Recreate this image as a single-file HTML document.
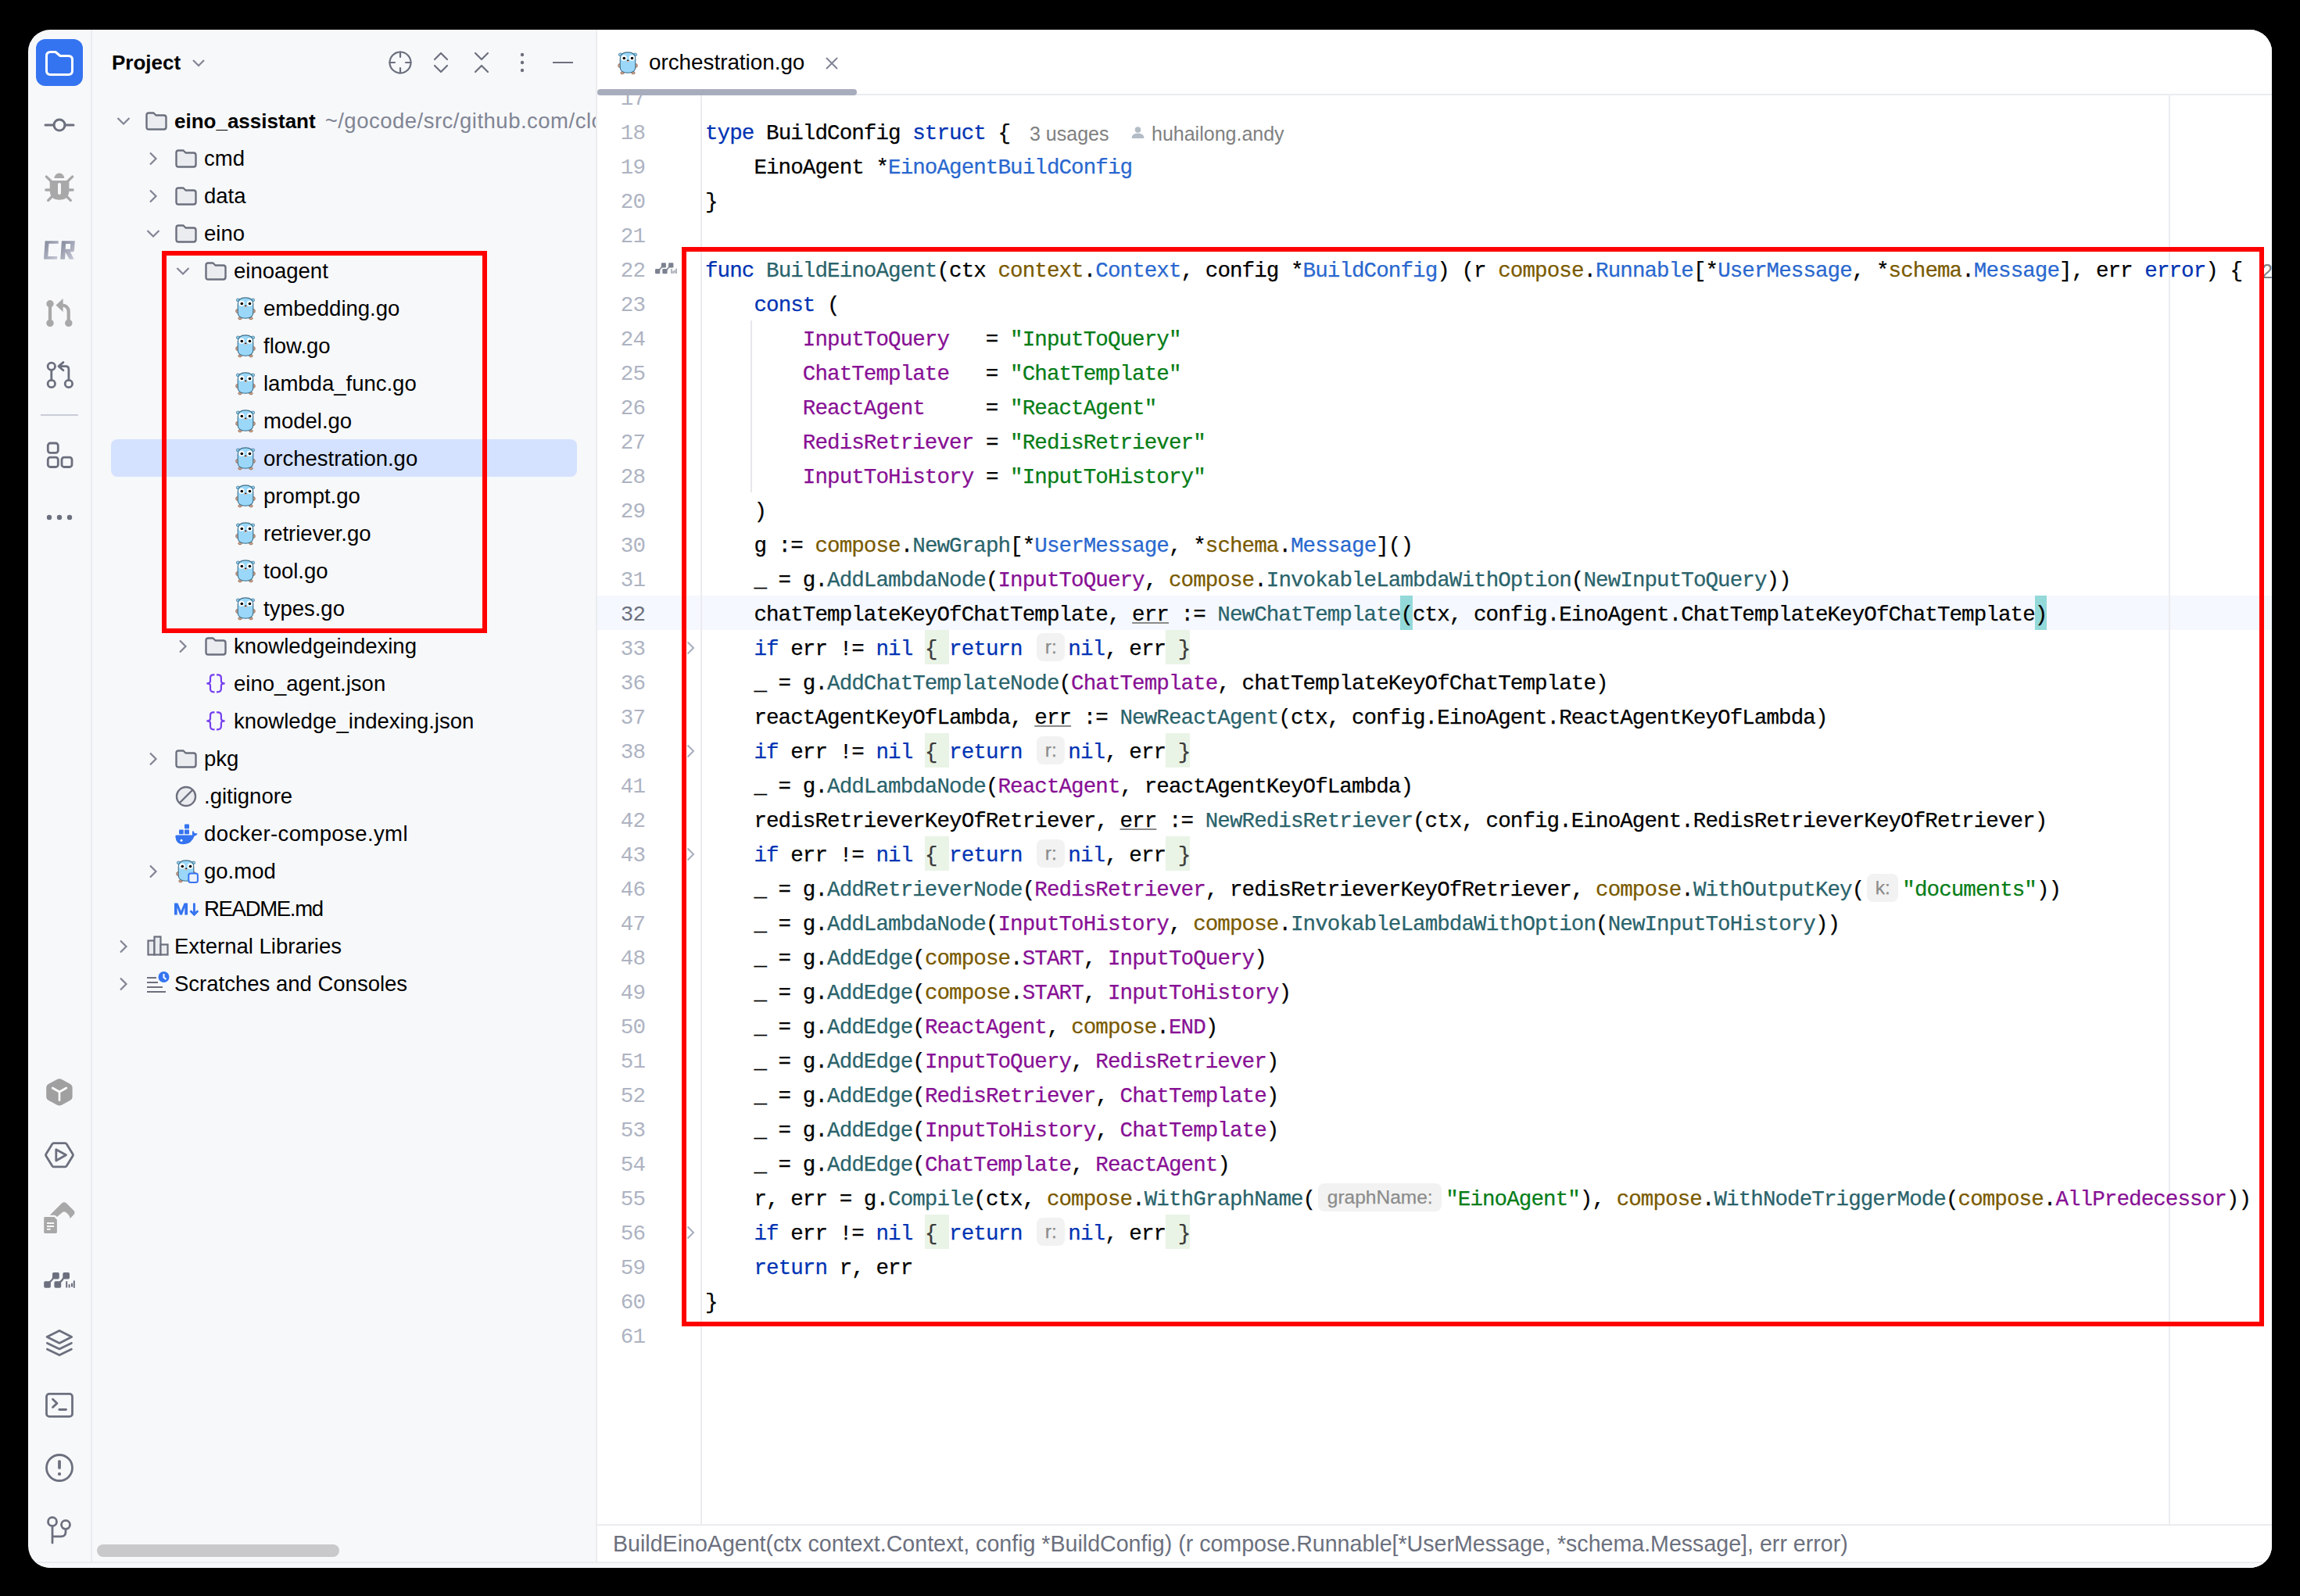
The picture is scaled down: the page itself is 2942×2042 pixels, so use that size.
<!DOCTYPE html>
<html><head><meta charset="utf-8"><style>
html,body{margin:0;padding:0;background:#000;width:2942px;height:2042px;overflow:hidden}
#win{position:absolute;left:36px;top:38px;width:2870px;height:1968px;border-radius:28px;overflow:hidden;background:#f7f8fa}
.abs{position:absolute}
#root{position:absolute;left:-36px;top:-38px;width:2942px;height:2042px}
.ic{position:absolute;line-height:0}
.ic svg{display:block;overflow:visible}
.tr{position:absolute;font-family:"Liberation Sans",sans-serif;font-size:27.5px;line-height:48px;height:48px;color:#000;white-space:pre}
.tr.b{font-weight:bold;font-size:26px}
.path{font-weight:normal;font-size:27.5px;color:#818594;margin-left:12px;letter-spacing:0.5px}
.hdr{position:absolute;font-family:"Liberation Sans",sans-serif;font-weight:bold;font-size:26px;line-height:44px;color:#000}
.ln{position:absolute;left:700px;width:125px;text-align:right;font-family:"Liberation Mono",monospace;font-size:27.5px;letter-spacing:-0.9px;line-height:44px;height:44px;color:#aeb3c2;white-space:pre}
.ln.cur{color:#6c707e}
.cl{position:absolute;left:902px;font-family:"Liberation Mono",monospace;font-size:27.5px;letter-spacing:-0.9px;line-height:44px;height:44px;color:#000;white-space:pre;-webkit-text-stroke:0.25px currentColor}
.k{color:#0033b3} .f{color:#2a636b} .t{color:#2a68cf} .p{color:#7a5a00} .c{color:#871094} .s{color:#067d17}
.u{text-decoration:underline;text-decoration-color:#8a8a8a;text-underline-offset:1.5px;text-decoration-thickness:2px}
.bm{background:#93d9d9;display:inline-block;height:44px;vertical-align:top;margin-top:-3.0px;line-height:50px}
.fold{background:#e9f4e6;color:#3a3a3a;display:inline-block;height:44px;vertical-align:top;margin-top:-3.0px;line-height:50px}
.hint{display:inline-block;height:44px;vertical-align:top;position:relative}
.hbox{position:absolute;top:1px;height:36px;border-radius:8px;background:#f2f2f2;color:#8c8c8c;font-family:"Liberation Sans",sans-serif;font-size:24.5px;line-height:36px;text-align:center;letter-spacing:normal}
.inl{position:absolute;font-family:"Liberation Sans",sans-serif;font-size:25px;color:#808080;white-space:pre;line-height:44px}
</style></head><body>
<div id="win"><div id="root">
<!-- left toolbar -->
<div class="abs" style="left:116px;top:0;width:2px;height:2042px;background:#ebecf0"></div>
<div style="position:absolute;left:46px;top:50px;width:60px;height:60px;border-radius:12px;background:#3574f0"></div><div class="ic" style="left:46px;top:50px"><svg width="60" height="60" viewBox="0 0 60 60"><path d="M13.5 21.5 Q13.5 16.5 18.5 16.5 H25 L31 21.5 H41.5 Q46.5 21.5 46.5 26.5 V40.5 Q46.5 45.5 41.5 45.5 H18.5 Q13.5 45.5 13.5 40.5 Z" fill="none" stroke="#fff" stroke-width="3" stroke-linejoin="round"/></svg></div><div class="ic" style="left:56.0px;top:140.0px"><svg width="40" height="40" viewBox="0 0 40 40"><circle cx="20" cy="20" r="7" stroke="#6c707e" stroke-width="3" fill="none" stroke-linecap="round" stroke-linejoin="round"/><path d="M2 20 H13 M27 20 H38" stroke="#6c707e" stroke-width="3" fill="none" stroke-linecap="round" stroke-linejoin="round"/></svg></div><div class="ic" style="left:56.0px;top:221.0px"><svg width="40" height="40" viewBox="0 0 40 40"><path d="M13.5 7 A6.35 6.5 0 0 1 26.2 7 Z" fill="#a8a8a8"/><path d="M7.7 10 H32.4 V22 Q32.4 34.7 20 34.7 Q7.7 34.7 7.7 22 Z" fill="#a8a8a8"/><rect x="18" y="13" width="4" height="15" rx="2" fill="#f7f8fa"/><path d="M3.4 5.1 L9 10.5 M36.6 5.1 L31 10.5 M2.8 22 H8 M32 22 H37.2 M5.7 35.4 L10.5 30.5 M34.3 35.4 L29.5 30.5" stroke="#a8a8a8" stroke-width="3.3" stroke-linecap="round"/></svg></div><div class="ic" style="left:52px;top:296px"><svg width="48" height="48" viewBox="0 0 48 48"><defs><linearGradient id="crg" x1="0" y1="0" x2="1" y2="1"><stop offset="0" stop-color="#858a9d"/><stop offset="1" stop-color="#c6c9d5"/></linearGradient></defs><g transform="translate(2.5,0) skewX(-4)" fill="url(#crg)" fill-rule="evenodd"><path d="M4 12.2 H21.2 V15.8 H9.1 V32 H21 V35.8 H4.8 L4 35 Z"/><path d="M25.3 35.8 V12.2 H42.2 V24.8 L40.8 26.3 H37.2 L42.7 35.8 H36.8 L31 26.5 V35.8 Z M30.8 16 V22.8 H36.9 V16 Z"/></g></svg></div><div class="ic" style="left:52px;top:376px"><svg width="48" height="48" viewBox="0 0 48 48"><circle cx="12" cy="12.8" r="4.7" fill="#a8a8a8"/><circle cx="12" cy="37.4" r="4.7" fill="#a8a8a8"/><circle cx="35.8" cy="37.4" r="4.7" fill="#a8a8a8"/><path d="M12 12.8 V37.4" stroke="#a8a8a8" stroke-width="4.2"/><path d="M35.7 37.4 V23 Q35.7 15 27 14.4" stroke="#a8a8a8" stroke-width="4.2" fill="none"/><path d="M19.5 14.4 L28.6 5.9 V22.9 Z" fill="#a8a8a8"/></svg></div><div class="ic" style="left:52px;top:456px"><svg width="48" height="48" viewBox="0 0 48 48"><circle cx="13.8" cy="12.8" r="4.7" stroke="#6c707e" stroke-width="2.8" fill="none" stroke-linecap="round" stroke-linejoin="round"/><circle cx="13.8" cy="35" r="4.7" stroke="#6c707e" stroke-width="2.8" fill="none" stroke-linecap="round" stroke-linejoin="round"/><circle cx="35.9" cy="35" r="4.7" stroke="#6c707e" stroke-width="2.8" fill="none" stroke-linecap="round" stroke-linejoin="round"/><path d="M13.8 17.5 V30.3 M35.9 30.3 V16.5 Q35.9 12.6 32 12.6 H23 M28.9 7.6 L23 12.6 L28.9 17.8" stroke="#6c707e" stroke-width="2.8" fill="none" stroke-linecap="round" stroke-linejoin="round"/></svg></div><div style="position:absolute;left:52px;top:530px;width:48px;height:2px;background:#c9ccd6"></div><div class="ic" style="left:52px;top:557px"><svg width="48" height="48" viewBox="0 0 48 48"><rect x="9.3" y="10" width="13" height="12.3" rx="3" stroke="#6c707e" stroke-width="2.8" fill="none" stroke-linecap="round" stroke-linejoin="round"/><rect x="9.3" y="28.2" width="13" height="12.3" rx="3" stroke="#6c707e" stroke-width="2.8" fill="none" stroke-linecap="round" stroke-linejoin="round"/><rect x="27" y="28.2" width="13" height="12.3" rx="3" stroke="#6c707e" stroke-width="2.8" fill="none" stroke-linecap="round" stroke-linejoin="round"/></svg></div><div class="ic" style="left:56.0px;top:656.0px"><svg width="40" height="12" viewBox="0 0 40 12"><circle cx="7" cy="6" r="3.2" fill="#6c707e"/><circle cx="20" cy="6" r="3.2" fill="#6c707e"/><circle cx="33" cy="6" r="3.2" fill="#6c707e"/></svg></div><div class="ic" style="left:52px;top:1374px"><svg width="48" height="48" viewBox="0 0 48 48"><path d="M20.5 7.2 Q24 5.2 27.5 7.2 L37.5 12.8 Q40.6 14.6 40.6 18 V29 Q40.6 32.3 37.5 34 L27.5 39.6 Q24 41.6 20.5 39.6 L10.3 34 Q7.2 32.3 7.2 29 V18 Q7.2 14.6 10.3 12.8 Z" fill="#a0a0a0"/><path d="M15.2 18 L24 23 L32.9 18 M24 23 V33.8" stroke="#fff" stroke-width="2.6" fill="none" stroke-linecap="round" stroke-linejoin="round"/></svg></div><div class="ic" style="left:52px;top:1454px"><svg width="48" height="48" viewBox="0 0 48 48"><path d="M16.5 8.7 H31.5 Q32.5 8.7 33.2 9.7 L41.2 22.8 Q41.8 23.8 41.2 24.8 L33.2 37.8 Q32.5 38.8 31.5 38.8 H16.5 Q15.5 38.8 14.8 37.8 L6.8 24.8 Q6.2 23.8 6.8 22.8 L14.8 9.7 Q15.5 8.7 16.5 8.7 Z" stroke="#6c707e" stroke-width="2.8" fill="none" stroke-linecap="round" stroke-linejoin="round"/><path d="M19.8 16.8 V31 L32.5 23.8 Z" stroke="#6c707e" stroke-width="2.8" fill="none" stroke-linecap="round" stroke-linejoin="round"/></svg></div><div class="ic" style="left:52px;top:1532px"><svg width="48" height="48" viewBox="0 0 48 48"><path d="M11.7 22.7 L27 7.5 Q30 4.8 33 7.5 L42.5 17 Q44.5 19.5 42.5 22 L37.6 27 Q37 23 34.5 21 L32 19 Q30 17.5 28 19 L20.8 25 Q19.5 22.8 17 22.7 Z" fill="#a8a8a8"/><path d="M4.2 26.5 Q4.2 25.1 5.6 25.1 H17.4 L20.9 28.6 V44.5 Q20.9 45.9 19.5 45.9 H5.6 Q4.2 45.9 4.2 44.5 Z" fill="#a8a8a8"/><path d="M8 33.1 H17.1 M8 37 H17.1 M8 40.8 H12.6" stroke="#f7f8fa" stroke-width="2"/></svg></div><div class="ic" style="left:52px;top:1614px"><svg width="48" height="48" viewBox="0 0 48 48"><g fill="#6c707e"><rect x="4.2" y="25.3" width="8.7" height="8.4" rx="1.8"/><rect x="15" y="14.1" width="8.8" height="8.5" rx="1.8"/><rect x="17.4" y="25.3" width="8.8" height="8.4" rx="1.8"/><rect x="28.3" y="14.1" width="8.7" height="8.5" rx="1.8"/></g><path d="M11.5 26.5 Q15 24 16 21 M24.7 26.5 Q28 24 29.3 21" stroke="#6c707e" stroke-width="2.2" fill="none"/><path d="M33.2 25.3 V33.4 M36.6 29.2 V33.4 M40 27.7 V32.5 M42.8 24.4 V33.7" stroke="#6c707e" stroke-width="2"/></svg></div><div class="ic" style="left:52px;top:1694px"><svg width="48" height="48" viewBox="0 0 48 48"><path d="M8.1 16.4 L24 8.4 L39.7 16.4 L24 24.4 Z" stroke="#6c707e" stroke-width="2.8" fill="none" stroke-linecap="round" stroke-linejoin="round"/><path d="M8.4 24.4 L24 31.9 L39.4 24.4 M8.4 32.3 L24 39.8 L39.4 32.3" stroke="#6c707e" stroke-width="2.8" fill="none" stroke-linecap="round" stroke-linejoin="round"/></svg></div><div class="ic" style="left:52px;top:1774px"><svg width="48" height="48" viewBox="0 0 48 48"><rect x="7.5" y="9.4" width="33" height="29" rx="3.5" stroke="#6c707e" stroke-width="2.8" fill="none" stroke-linecap="round" stroke-linejoin="round"/><path d="M15.5 16.2 L21 21.4 L15.5 26.5 M23.8 29.5 H32.5" stroke="#6c707e" stroke-width="2.8" fill="none" stroke-linecap="round" stroke-linejoin="round"/></svg></div><div class="ic" style="left:52px;top:1854px"><svg width="48" height="48" viewBox="0 0 48 48"><circle cx="24" cy="24" r="16.5" stroke="#6c707e" stroke-width="2.8" fill="none" stroke-linecap="round" stroke-linejoin="round"/><path d="M24 15.8 V23.9" stroke="#6c707e" stroke-width="3.8" stroke-linecap="round"/><circle cx="24" cy="31.9" r="2.1" fill="#6c707e"/></svg></div><div class="ic" style="left:52px;top:1934px"><svg width="48" height="48" viewBox="0 0 48 48"><circle cx="15" cy="12.9" r="5.5" stroke="#6c707e" stroke-width="2.8" fill="none" stroke-linecap="round" stroke-linejoin="round"/><circle cx="32" cy="16.8" r="5.5" stroke="#6c707e" stroke-width="2.8" fill="none" stroke-linecap="round" stroke-linejoin="round"/><path d="M15 18.4 V40 M15 31.9 H26 Q32 31.9 32 26 V22.3" stroke="#6c707e" stroke-width="2.8" fill="none" stroke-linecap="round" stroke-linejoin="round"/></svg></div>
<!-- project panel -->
<div class="hdr" style="left:143px;top:58px">Project</div><div class="ic" style="left:244px;top:74px"><svg width="20" height="14" viewBox="0 0 20 14"><path d="M3 3 L10 10 L17 3" fill="none" stroke="#818594" stroke-width="2.2"/></svg></div><div class="ic" style="left:496px;top:64px"><svg width="32" height="32" viewBox="0 0 32 32"><circle cx="16" cy="16" r="13.5" stroke="#6c707e" stroke-width="2.2" fill="none" stroke-linecap="round" stroke-linejoin="round"/><path d="M16 2.5 V9 M16 23 V29.5 M2.5 16 H9 M23 16 H29.5" stroke="#6c707e" stroke-width="2.2" fill="none" stroke-linecap="round" stroke-linejoin="round"/></svg></div><div class="ic" style="left:548px;top:64px"><svg width="32" height="32" viewBox="0 0 32 32"><path d="M8 12 L16 4 L24 12 M8 20 L16 28 L24 20" stroke="#6c707e" stroke-width="2.2" fill="none" stroke-linecap="round" stroke-linejoin="round"/></svg></div><div class="ic" style="left:600px;top:64px"><svg width="32" height="32" viewBox="0 0 32 32"><path d="M8 4 L16 12 L24 4 M8 28 L16 20 L24 28" stroke="#6c707e" stroke-width="2.2" fill="none" stroke-linecap="round" stroke-linejoin="round"/></svg></div><div class="ic" style="left:652px;top:64px"><svg width="32" height="32" viewBox="0 0 32 32"><circle cx="16" cy="6" r="2.2" fill="#6c707e"/><circle cx="16" cy="16" r="2.2" fill="#6c707e"/><circle cx="16" cy="26" r="2.2" fill="#6c707e"/></svg></div><div style="position:absolute;left:707px;top:79px;width:26px;height:2.4px;background:#6c707e"></div>
<div class="abs" style="left:142px;top:562px;width:596px;height:48px;border-radius:8px;background:#d4e2ff"></div>
<div class="ic" style="left:149px;top:148.5px"><svg width="18" height="12" viewBox="0 0 18 12"><path d="M1.5 2 L9 9.5 L16.5 2" fill="none" stroke="#818594" stroke-width="2.2"/></svg></div><div class="ic" style="left:186px;top:142.5px"><svg width="28" height="24" viewBox="0 0 28 24"><path d="M1.5 4.5 Q1.5 1.5 4.5 1.5 H10.5 L13.5 4.5 H23.5 Q26.5 4.5 26.5 7.5 V19.5 Q26.5 22.5 23.5 22.5 H4.5 Q1.5 22.5 1.5 19.5 Z" fill="#ebecf0" stroke="#6c707e" stroke-width="2.4" stroke-linejoin="round"/></svg></div><div class="tr b" style="left:223px;top:130.5px">eino_assistant<span class="path">~/gocode/src/github.com/cloudwego/eino-examples/eino_assistant</span></div><div class="ic" style="left:190px;top:193.5px"><svg width="12" height="18" viewBox="0 0 12 18"><path d="M2 1.5 L9.5 9 L2 16.5" fill="none" stroke="#818594" stroke-width="2.2"/></svg></div><div class="ic" style="left:224px;top:190.5px"><svg width="28" height="24" viewBox="0 0 28 24"><path d="M1.5 4.5 Q1.5 1.5 4.5 1.5 H10.5 L13.5 4.5 H23.5 Q26.5 4.5 26.5 7.5 V19.5 Q26.5 22.5 23.5 22.5 H4.5 Q1.5 22.5 1.5 19.5 Z" fill="#ebecf0" stroke="#6c707e" stroke-width="2.4" stroke-linejoin="round"/></svg></div><div class="tr" style="left:261px;top:178.5px;">cmd</div><div class="ic" style="left:190px;top:241.5px"><svg width="12" height="18" viewBox="0 0 12 18"><path d="M2 1.5 L9.5 9 L2 16.5" fill="none" stroke="#818594" stroke-width="2.2"/></svg></div><div class="ic" style="left:224px;top:238.5px"><svg width="28" height="24" viewBox="0 0 28 24"><path d="M1.5 4.5 Q1.5 1.5 4.5 1.5 H10.5 L13.5 4.5 H23.5 Q26.5 4.5 26.5 7.5 V19.5 Q26.5 22.5 23.5 22.5 H4.5 Q1.5 22.5 1.5 19.5 Z" fill="#ebecf0" stroke="#6c707e" stroke-width="2.4" stroke-linejoin="round"/></svg></div><div class="tr" style="left:261px;top:226.5px;">data</div><div class="ic" style="left:187px;top:292.5px"><svg width="18" height="12" viewBox="0 0 18 12"><path d="M1.5 2 L9 9.5 L16.5 2" fill="none" stroke="#818594" stroke-width="2.2"/></svg></div><div class="ic" style="left:224px;top:286.5px"><svg width="28" height="24" viewBox="0 0 28 24"><path d="M1.5 4.5 Q1.5 1.5 4.5 1.5 H10.5 L13.5 4.5 H23.5 Q26.5 4.5 26.5 7.5 V19.5 Q26.5 22.5 23.5 22.5 H4.5 Q1.5 22.5 1.5 19.5 Z" fill="#ebecf0" stroke="#6c707e" stroke-width="2.4" stroke-linejoin="round"/></svg></div><div class="tr" style="left:261px;top:274.5px;">eino</div><div class="ic" style="left:225px;top:340.5px"><svg width="18" height="12" viewBox="0 0 18 12"><path d="M1.5 2 L9 9.5 L16.5 2" fill="none" stroke="#818594" stroke-width="2.2"/></svg></div><div class="ic" style="left:262px;top:334.5px"><svg width="28" height="24" viewBox="0 0 28 24"><path d="M1.5 4.5 Q1.5 1.5 4.5 1.5 H10.5 L13.5 4.5 H23.5 Q26.5 4.5 26.5 7.5 V19.5 Q26.5 22.5 23.5 22.5 H4.5 Q1.5 22.5 1.5 19.5 Z" fill="#ebecf0" stroke="#6c707e" stroke-width="2.4" stroke-linejoin="round"/></svg></div><div class="tr" style="left:299px;top:322.5px;">einoagent</div><div class="ic" style="left:300px;top:379.5px"><svg width="28" height="30" viewBox="0 0 28 30"><ellipse cx="4.6" cy="3.9" rx="2.3" ry="1.9" fill="#8fd0f0" stroke="#4a7a96" stroke-width="0.8"/><ellipse cx="23.4" cy="3.9" rx="2.3" ry="1.9" fill="#8fd0f0" stroke="#4a7a96" stroke-width="0.8"/><ellipse cx="3.6" cy="18" rx="2" ry="2.4" fill="#d9a68a" stroke="#6b4a3a" stroke-width="0.6"/><ellipse cx="24.4" cy="18" rx="2" ry="2.4" fill="#d9a68a" stroke="#6b4a3a" stroke-width="0.6"/><ellipse cx="7" cy="27.3" rx="2.2" ry="1.6" fill="#d9a68a" stroke="#6b4a3a" stroke-width="0.6"/><ellipse cx="21" cy="27.3" rx="2.2" ry="1.6" fill="#d9a68a" stroke="#6b4a3a" stroke-width="0.6"/><path d="M4.2 9 Q4.2 0.9 14 0.9 Q23.8 0.9 23.8 9 V20 Q23.8 27.2 14 27.2 Q4.2 27.2 4.2 20 Z" fill="#9ad7f8" stroke="#3e6e88" stroke-width="1.1"/><circle cx="9" cy="8.2" r="3.6" fill="#fff"/><circle cx="19.3" cy="8.2" r="3.6" fill="#fff"/><circle cx="9.3" cy="8.5" r="1.8" fill="#000"/><circle cx="19.5" cy="8.5" r="1.8" fill="#000"/><ellipse cx="14.2" cy="12" rx="1.7" ry="1.3" fill="#e8b49a"/><ellipse cx="14.2" cy="11.3" rx="1.1" ry="0.8" fill="#000"/></svg></div><div class="tr" style="left:337px;top:370.5px;">embedding.go</div><div class="ic" style="left:300px;top:427.5px"><svg width="28" height="30" viewBox="0 0 28 30"><ellipse cx="4.6" cy="3.9" rx="2.3" ry="1.9" fill="#8fd0f0" stroke="#4a7a96" stroke-width="0.8"/><ellipse cx="23.4" cy="3.9" rx="2.3" ry="1.9" fill="#8fd0f0" stroke="#4a7a96" stroke-width="0.8"/><ellipse cx="3.6" cy="18" rx="2" ry="2.4" fill="#d9a68a" stroke="#6b4a3a" stroke-width="0.6"/><ellipse cx="24.4" cy="18" rx="2" ry="2.4" fill="#d9a68a" stroke="#6b4a3a" stroke-width="0.6"/><ellipse cx="7" cy="27.3" rx="2.2" ry="1.6" fill="#d9a68a" stroke="#6b4a3a" stroke-width="0.6"/><ellipse cx="21" cy="27.3" rx="2.2" ry="1.6" fill="#d9a68a" stroke="#6b4a3a" stroke-width="0.6"/><path d="M4.2 9 Q4.2 0.9 14 0.9 Q23.8 0.9 23.8 9 V20 Q23.8 27.2 14 27.2 Q4.2 27.2 4.2 20 Z" fill="#9ad7f8" stroke="#3e6e88" stroke-width="1.1"/><circle cx="9" cy="8.2" r="3.6" fill="#fff"/><circle cx="19.3" cy="8.2" r="3.6" fill="#fff"/><circle cx="9.3" cy="8.5" r="1.8" fill="#000"/><circle cx="19.5" cy="8.5" r="1.8" fill="#000"/><ellipse cx="14.2" cy="12" rx="1.7" ry="1.3" fill="#e8b49a"/><ellipse cx="14.2" cy="11.3" rx="1.1" ry="0.8" fill="#000"/></svg></div><div class="tr" style="left:337px;top:418.5px;">flow.go</div><div class="ic" style="left:300px;top:475.5px"><svg width="28" height="30" viewBox="0 0 28 30"><ellipse cx="4.6" cy="3.9" rx="2.3" ry="1.9" fill="#8fd0f0" stroke="#4a7a96" stroke-width="0.8"/><ellipse cx="23.4" cy="3.9" rx="2.3" ry="1.9" fill="#8fd0f0" stroke="#4a7a96" stroke-width="0.8"/><ellipse cx="3.6" cy="18" rx="2" ry="2.4" fill="#d9a68a" stroke="#6b4a3a" stroke-width="0.6"/><ellipse cx="24.4" cy="18" rx="2" ry="2.4" fill="#d9a68a" stroke="#6b4a3a" stroke-width="0.6"/><ellipse cx="7" cy="27.3" rx="2.2" ry="1.6" fill="#d9a68a" stroke="#6b4a3a" stroke-width="0.6"/><ellipse cx="21" cy="27.3" rx="2.2" ry="1.6" fill="#d9a68a" stroke="#6b4a3a" stroke-width="0.6"/><path d="M4.2 9 Q4.2 0.9 14 0.9 Q23.8 0.9 23.8 9 V20 Q23.8 27.2 14 27.2 Q4.2 27.2 4.2 20 Z" fill="#9ad7f8" stroke="#3e6e88" stroke-width="1.1"/><circle cx="9" cy="8.2" r="3.6" fill="#fff"/><circle cx="19.3" cy="8.2" r="3.6" fill="#fff"/><circle cx="9.3" cy="8.5" r="1.8" fill="#000"/><circle cx="19.5" cy="8.5" r="1.8" fill="#000"/><ellipse cx="14.2" cy="12" rx="1.7" ry="1.3" fill="#e8b49a"/><ellipse cx="14.2" cy="11.3" rx="1.1" ry="0.8" fill="#000"/></svg></div><div class="tr" style="left:337px;top:466.5px;">lambda_func.go</div><div class="ic" style="left:300px;top:523.5px"><svg width="28" height="30" viewBox="0 0 28 30"><ellipse cx="4.6" cy="3.9" rx="2.3" ry="1.9" fill="#8fd0f0" stroke="#4a7a96" stroke-width="0.8"/><ellipse cx="23.4" cy="3.9" rx="2.3" ry="1.9" fill="#8fd0f0" stroke="#4a7a96" stroke-width="0.8"/><ellipse cx="3.6" cy="18" rx="2" ry="2.4" fill="#d9a68a" stroke="#6b4a3a" stroke-width="0.6"/><ellipse cx="24.4" cy="18" rx="2" ry="2.4" fill="#d9a68a" stroke="#6b4a3a" stroke-width="0.6"/><ellipse cx="7" cy="27.3" rx="2.2" ry="1.6" fill="#d9a68a" stroke="#6b4a3a" stroke-width="0.6"/><ellipse cx="21" cy="27.3" rx="2.2" ry="1.6" fill="#d9a68a" stroke="#6b4a3a" stroke-width="0.6"/><path d="M4.2 9 Q4.2 0.9 14 0.9 Q23.8 0.9 23.8 9 V20 Q23.8 27.2 14 27.2 Q4.2 27.2 4.2 20 Z" fill="#9ad7f8" stroke="#3e6e88" stroke-width="1.1"/><circle cx="9" cy="8.2" r="3.6" fill="#fff"/><circle cx="19.3" cy="8.2" r="3.6" fill="#fff"/><circle cx="9.3" cy="8.5" r="1.8" fill="#000"/><circle cx="19.5" cy="8.5" r="1.8" fill="#000"/><ellipse cx="14.2" cy="12" rx="1.7" ry="1.3" fill="#e8b49a"/><ellipse cx="14.2" cy="11.3" rx="1.1" ry="0.8" fill="#000"/></svg></div><div class="tr" style="left:337px;top:514.5px;">model.go</div><div class="ic" style="left:300px;top:571.5px"><svg width="28" height="30" viewBox="0 0 28 30"><ellipse cx="4.6" cy="3.9" rx="2.3" ry="1.9" fill="#8fd0f0" stroke="#4a7a96" stroke-width="0.8"/><ellipse cx="23.4" cy="3.9" rx="2.3" ry="1.9" fill="#8fd0f0" stroke="#4a7a96" stroke-width="0.8"/><ellipse cx="3.6" cy="18" rx="2" ry="2.4" fill="#d9a68a" stroke="#6b4a3a" stroke-width="0.6"/><ellipse cx="24.4" cy="18" rx="2" ry="2.4" fill="#d9a68a" stroke="#6b4a3a" stroke-width="0.6"/><ellipse cx="7" cy="27.3" rx="2.2" ry="1.6" fill="#d9a68a" stroke="#6b4a3a" stroke-width="0.6"/><ellipse cx="21" cy="27.3" rx="2.2" ry="1.6" fill="#d9a68a" stroke="#6b4a3a" stroke-width="0.6"/><path d="M4.2 9 Q4.2 0.9 14 0.9 Q23.8 0.9 23.8 9 V20 Q23.8 27.2 14 27.2 Q4.2 27.2 4.2 20 Z" fill="#9ad7f8" stroke="#3e6e88" stroke-width="1.1"/><circle cx="9" cy="8.2" r="3.6" fill="#fff"/><circle cx="19.3" cy="8.2" r="3.6" fill="#fff"/><circle cx="9.3" cy="8.5" r="1.8" fill="#000"/><circle cx="19.5" cy="8.5" r="1.8" fill="#000"/><ellipse cx="14.2" cy="12" rx="1.7" ry="1.3" fill="#e8b49a"/><ellipse cx="14.2" cy="11.3" rx="1.1" ry="0.8" fill="#000"/></svg></div><div class="tr" style="left:337px;top:562.5px;">orchestration.go</div><div class="ic" style="left:300px;top:619.5px"><svg width="28" height="30" viewBox="0 0 28 30"><ellipse cx="4.6" cy="3.9" rx="2.3" ry="1.9" fill="#8fd0f0" stroke="#4a7a96" stroke-width="0.8"/><ellipse cx="23.4" cy="3.9" rx="2.3" ry="1.9" fill="#8fd0f0" stroke="#4a7a96" stroke-width="0.8"/><ellipse cx="3.6" cy="18" rx="2" ry="2.4" fill="#d9a68a" stroke="#6b4a3a" stroke-width="0.6"/><ellipse cx="24.4" cy="18" rx="2" ry="2.4" fill="#d9a68a" stroke="#6b4a3a" stroke-width="0.6"/><ellipse cx="7" cy="27.3" rx="2.2" ry="1.6" fill="#d9a68a" stroke="#6b4a3a" stroke-width="0.6"/><ellipse cx="21" cy="27.3" rx="2.2" ry="1.6" fill="#d9a68a" stroke="#6b4a3a" stroke-width="0.6"/><path d="M4.2 9 Q4.2 0.9 14 0.9 Q23.8 0.9 23.8 9 V20 Q23.8 27.2 14 27.2 Q4.2 27.2 4.2 20 Z" fill="#9ad7f8" stroke="#3e6e88" stroke-width="1.1"/><circle cx="9" cy="8.2" r="3.6" fill="#fff"/><circle cx="19.3" cy="8.2" r="3.6" fill="#fff"/><circle cx="9.3" cy="8.5" r="1.8" fill="#000"/><circle cx="19.5" cy="8.5" r="1.8" fill="#000"/><ellipse cx="14.2" cy="12" rx="1.7" ry="1.3" fill="#e8b49a"/><ellipse cx="14.2" cy="11.3" rx="1.1" ry="0.8" fill="#000"/></svg></div><div class="tr" style="left:337px;top:610.5px;">prompt.go</div><div class="ic" style="left:300px;top:667.5px"><svg width="28" height="30" viewBox="0 0 28 30"><ellipse cx="4.6" cy="3.9" rx="2.3" ry="1.9" fill="#8fd0f0" stroke="#4a7a96" stroke-width="0.8"/><ellipse cx="23.4" cy="3.9" rx="2.3" ry="1.9" fill="#8fd0f0" stroke="#4a7a96" stroke-width="0.8"/><ellipse cx="3.6" cy="18" rx="2" ry="2.4" fill="#d9a68a" stroke="#6b4a3a" stroke-width="0.6"/><ellipse cx="24.4" cy="18" rx="2" ry="2.4" fill="#d9a68a" stroke="#6b4a3a" stroke-width="0.6"/><ellipse cx="7" cy="27.3" rx="2.2" ry="1.6" fill="#d9a68a" stroke="#6b4a3a" stroke-width="0.6"/><ellipse cx="21" cy="27.3" rx="2.2" ry="1.6" fill="#d9a68a" stroke="#6b4a3a" stroke-width="0.6"/><path d="M4.2 9 Q4.2 0.9 14 0.9 Q23.8 0.9 23.8 9 V20 Q23.8 27.2 14 27.2 Q4.2 27.2 4.2 20 Z" fill="#9ad7f8" stroke="#3e6e88" stroke-width="1.1"/><circle cx="9" cy="8.2" r="3.6" fill="#fff"/><circle cx="19.3" cy="8.2" r="3.6" fill="#fff"/><circle cx="9.3" cy="8.5" r="1.8" fill="#000"/><circle cx="19.5" cy="8.5" r="1.8" fill="#000"/><ellipse cx="14.2" cy="12" rx="1.7" ry="1.3" fill="#e8b49a"/><ellipse cx="14.2" cy="11.3" rx="1.1" ry="0.8" fill="#000"/></svg></div><div class="tr" style="left:337px;top:658.5px;">retriever.go</div><div class="ic" style="left:300px;top:715.5px"><svg width="28" height="30" viewBox="0 0 28 30"><ellipse cx="4.6" cy="3.9" rx="2.3" ry="1.9" fill="#8fd0f0" stroke="#4a7a96" stroke-width="0.8"/><ellipse cx="23.4" cy="3.9" rx="2.3" ry="1.9" fill="#8fd0f0" stroke="#4a7a96" stroke-width="0.8"/><ellipse cx="3.6" cy="18" rx="2" ry="2.4" fill="#d9a68a" stroke="#6b4a3a" stroke-width="0.6"/><ellipse cx="24.4" cy="18" rx="2" ry="2.4" fill="#d9a68a" stroke="#6b4a3a" stroke-width="0.6"/><ellipse cx="7" cy="27.3" rx="2.2" ry="1.6" fill="#d9a68a" stroke="#6b4a3a" stroke-width="0.6"/><ellipse cx="21" cy="27.3" rx="2.2" ry="1.6" fill="#d9a68a" stroke="#6b4a3a" stroke-width="0.6"/><path d="M4.2 9 Q4.2 0.9 14 0.9 Q23.8 0.9 23.8 9 V20 Q23.8 27.2 14 27.2 Q4.2 27.2 4.2 20 Z" fill="#9ad7f8" stroke="#3e6e88" stroke-width="1.1"/><circle cx="9" cy="8.2" r="3.6" fill="#fff"/><circle cx="19.3" cy="8.2" r="3.6" fill="#fff"/><circle cx="9.3" cy="8.5" r="1.8" fill="#000"/><circle cx="19.5" cy="8.5" r="1.8" fill="#000"/><ellipse cx="14.2" cy="12" rx="1.7" ry="1.3" fill="#e8b49a"/><ellipse cx="14.2" cy="11.3" rx="1.1" ry="0.8" fill="#000"/></svg></div><div class="tr" style="left:337px;top:706.5px;">tool.go</div><div class="ic" style="left:300px;top:763.5px"><svg width="28" height="30" viewBox="0 0 28 30"><ellipse cx="4.6" cy="3.9" rx="2.3" ry="1.9" fill="#8fd0f0" stroke="#4a7a96" stroke-width="0.8"/><ellipse cx="23.4" cy="3.9" rx="2.3" ry="1.9" fill="#8fd0f0" stroke="#4a7a96" stroke-width="0.8"/><ellipse cx="3.6" cy="18" rx="2" ry="2.4" fill="#d9a68a" stroke="#6b4a3a" stroke-width="0.6"/><ellipse cx="24.4" cy="18" rx="2" ry="2.4" fill="#d9a68a" stroke="#6b4a3a" stroke-width="0.6"/><ellipse cx="7" cy="27.3" rx="2.2" ry="1.6" fill="#d9a68a" stroke="#6b4a3a" stroke-width="0.6"/><ellipse cx="21" cy="27.3" rx="2.2" ry="1.6" fill="#d9a68a" stroke="#6b4a3a" stroke-width="0.6"/><path d="M4.2 9 Q4.2 0.9 14 0.9 Q23.8 0.9 23.8 9 V20 Q23.8 27.2 14 27.2 Q4.2 27.2 4.2 20 Z" fill="#9ad7f8" stroke="#3e6e88" stroke-width="1.1"/><circle cx="9" cy="8.2" r="3.6" fill="#fff"/><circle cx="19.3" cy="8.2" r="3.6" fill="#fff"/><circle cx="9.3" cy="8.5" r="1.8" fill="#000"/><circle cx="19.5" cy="8.5" r="1.8" fill="#000"/><ellipse cx="14.2" cy="12" rx="1.7" ry="1.3" fill="#e8b49a"/><ellipse cx="14.2" cy="11.3" rx="1.1" ry="0.8" fill="#000"/></svg></div><div class="tr" style="left:337px;top:754.5px;">types.go</div><div class="ic" style="left:228px;top:817.5px"><svg width="12" height="18" viewBox="0 0 12 18"><path d="M2 1.5 L9.5 9 L2 16.5" fill="none" stroke="#818594" stroke-width="2.2"/></svg></div><div class="ic" style="left:262px;top:814.5px"><svg width="28" height="24" viewBox="0 0 28 24"><path d="M1.5 4.5 Q1.5 1.5 4.5 1.5 H10.5 L13.5 4.5 H23.5 Q26.5 4.5 26.5 7.5 V19.5 Q26.5 22.5 23.5 22.5 H4.5 Q1.5 22.5 1.5 19.5 Z" fill="#ebecf0" stroke="#6c707e" stroke-width="2.4" stroke-linejoin="round"/></svg></div><div class="tr" style="left:299px;top:802.5px;">knowledgeindexing</div><div class="ic" style="left:262px;top:860.5px"><svg width="28" height="28" viewBox="0 0 28 28"><path d="M12.5 2.4 H11 Q7 2.4 7 6.4 V10.5 Q7 13.4 2.3 13.4 Q7 13.4 7 16.3 V20.3 Q7 24.3 11 24.3 H12.5 M15 2.4 H16.5 Q20.9 2.4 20.9 6.4 V10.5 Q20.9 13.4 25.6 13.4 Q20.9 13.4 20.9 16.3 V20.3 Q20.9 24.3 16.5 24.3 H15" fill="none" stroke="#7540ee" stroke-width="2.2"/></svg></div><div class="tr" style="left:299px;top:850.5px;">eino_agent.json</div><div class="ic" style="left:262px;top:908.5px"><svg width="28" height="28" viewBox="0 0 28 28"><path d="M12.5 2.4 H11 Q7 2.4 7 6.4 V10.5 Q7 13.4 2.3 13.4 Q7 13.4 7 16.3 V20.3 Q7 24.3 11 24.3 H12.5 M15 2.4 H16.5 Q20.9 2.4 20.9 6.4 V10.5 Q20.9 13.4 25.6 13.4 Q20.9 13.4 20.9 16.3 V20.3 Q20.9 24.3 16.5 24.3 H15" fill="none" stroke="#7540ee" stroke-width="2.2"/></svg></div><div class="tr" style="left:299px;top:898.5px;">knowledge_indexing.json</div><div class="ic" style="left:190px;top:961.5px"><svg width="12" height="18" viewBox="0 0 12 18"><path d="M2 1.5 L9.5 9 L2 16.5" fill="none" stroke="#818594" stroke-width="2.2"/></svg></div><div class="ic" style="left:224px;top:958.5px"><svg width="28" height="24" viewBox="0 0 28 24"><path d="M1.5 4.5 Q1.5 1.5 4.5 1.5 H10.5 L13.5 4.5 H23.5 Q26.5 4.5 26.5 7.5 V19.5 Q26.5 22.5 23.5 22.5 H4.5 Q1.5 22.5 1.5 19.5 Z" fill="#ebecf0" stroke="#6c707e" stroke-width="2.4" stroke-linejoin="round"/></svg></div><div class="tr" style="left:261px;top:946.5px;">pkg</div><div class="ic" style="left:224px;top:1004.5px"><svg width="28" height="28" viewBox="0 0 28 28"><circle cx="14" cy="14" r="12" fill="#ebecf0" stroke="#6c707e" stroke-width="2.4"/><path d="M6 22 L22 6" stroke="#6c707e" stroke-width="2.4"/></svg></div><div class="tr" style="left:261px;top:994.5px;">.gitignore</div><div class="ic" style="left:224px;top:1052.5px"><svg width="30" height="28" viewBox="0 0 30 28"><g fill="#3574f0"><rect x="12" y="1.5" width="6" height="5.8" rx="0.8"/><rect x="5" y="8.5" width="5.8" height="5.8" rx="0.8"/><rect x="12" y="8.5" width="6" height="5.8" rx="0.8"/><path d="M0.3 17 Q0.3 15.5 1.8 15.5 H22 Q21.5 11.5 22.6 9.8 Q24.3 11 25 13.2 Q27 12.8 28.8 13.8 Q27 16.5 24.6 16.8 Q21 27.3 10.3 27.3 Q1 27.3 0.3 17 Z"/></g><circle cx="8" cy="22.3" r="1.5" fill="#fff"/></svg></div><div class="tr" style="left:261px;top:1042.5px;letter-spacing:0.4px;">docker-compose.yml</div><div class="ic" style="left:190px;top:1105.5px"><svg width="12" height="18" viewBox="0 0 12 18"><path d="M2 1.5 L9.5 9 L2 16.5" fill="none" stroke="#818594" stroke-width="2.2"/></svg></div><div class="ic" style="left:224px;top:1099.5px"><svg width="28" height="30" viewBox="0 0 28 30"><ellipse cx="4.6" cy="3.9" rx="2.3" ry="1.9" fill="#8fd0f0" stroke="#4a7a96" stroke-width="0.8"/><ellipse cx="23.4" cy="3.9" rx="2.3" ry="1.9" fill="#8fd0f0" stroke="#4a7a96" stroke-width="0.8"/><ellipse cx="3.6" cy="18" rx="2" ry="2.4" fill="#d9a68a" stroke="#6b4a3a" stroke-width="0.6"/><ellipse cx="24.4" cy="18" rx="2" ry="2.4" fill="#d9a68a" stroke="#6b4a3a" stroke-width="0.6"/><ellipse cx="7" cy="27.3" rx="2.2" ry="1.6" fill="#d9a68a" stroke="#6b4a3a" stroke-width="0.6"/><ellipse cx="21" cy="27.3" rx="2.2" ry="1.6" fill="#d9a68a" stroke="#6b4a3a" stroke-width="0.6"/><path d="M4.2 9 Q4.2 0.9 14 0.9 Q23.8 0.9 23.8 9 V20 Q23.8 27.2 14 27.2 Q4.2 27.2 4.2 20 Z" fill="#9ad7f8" stroke="#3e6e88" stroke-width="1.1"/><circle cx="9" cy="8.2" r="3.6" fill="#fff"/><circle cx="19.3" cy="8.2" r="3.6" fill="#fff"/><circle cx="9.3" cy="8.5" r="1.8" fill="#000"/><circle cx="19.5" cy="8.5" r="1.8" fill="#000"/><ellipse cx="14.2" cy="12" rx="1.7" ry="1.3" fill="#e8b49a"/><ellipse cx="14.2" cy="11.3" rx="1.1" ry="0.8" fill="#000"/><rect x="17.3" y="17.5" width="11.6" height="11.6" rx="2.5" fill="#ebf2ff" stroke="#3574f0" stroke-width="2"/></svg></div><div class="tr" style="left:261px;top:1090.5px;">go.mod</div><div class="ic" style="left:222px;top:1152.5px"><svg width="32" height="20" viewBox="0 0 32 20"><path d="M1 17.5 V2.5 H5.4 L9.5 12.5 L13.6 2.5 H18 V17.5 H14.3 V8 L11 17.5 H8 L4.7 8 V17.5 Z" fill="#3574f0"/><path d="M26.4 2.5 V16 M21.5 12.3 L26.4 17.2 L31.2 12.3" fill="none" stroke="#3574f0" stroke-width="2.9"/></svg></div><div class="tr" style="left:261px;top:1138.5px;letter-spacing:-1.3px;">README.md</div><div class="ic" style="left:152px;top:1201.5px"><svg width="12" height="18" viewBox="0 0 12 18"><path d="M2 1.5 L9.5 9 L2 16.5" fill="none" stroke="#818594" stroke-width="2.2"/></svg></div><div class="ic" style="left:188px;top:1196.5px"><svg width="28" height="26" viewBox="0 0 28 26"><g fill="#ebecf0" stroke="#6c707e" stroke-width="2.2"><rect x="1.5" y="6.5" width="8" height="18"/><rect x="9.5" y="1.5" width="8" height="23"/><rect x="17.5" y="11.5" width="9" height="13"/></g></svg></div><div class="tr" style="left:223px;top:1186.5px;">External Libraries</div><div class="ic" style="left:152px;top:1249.5px"><svg width="12" height="18" viewBox="0 0 12 18"><path d="M2 1.5 L9.5 9 L2 16.5" fill="none" stroke="#818594" stroke-width="2.2"/></svg></div><div class="ic" style="left:188px;top:1242.5px"><svg width="30" height="28" viewBox="0 0 30 28"><g stroke="#6c707e" stroke-width="2.2"><path d="M0 8 H12 M0 14 H14 M0 20 H20 M0 26 H24"/></g><circle cx="21.5" cy="7" r="7" fill="#3574f0"/><path d="M21.5 3 V7.5 L24.5 10" stroke="#fff" stroke-width="2" fill="none"/></svg></div><div class="tr" style="left:223px;top:1234.5px;">Scratches and Consoles</div>
<div class="abs" style="left:124px;top:1976px;width:310px;height:16px;border-radius:8px;background:#c9c9cb"></div>
<!-- editor -->
<div class="abs" style="left:762px;top:0;width:2178px;height:2042px;background:#fff;border-left:2px solid #ebecf0"></div>
<div class="abs" style="left:764px;top:120px;width:2178px;height:2px;background:#ebecf0"></div>
<div class="ic" style="left:789px;top:66px"><svg width="28" height="30" viewBox="0 0 28 30"><ellipse cx="4.6" cy="3.9" rx="2.3" ry="1.9" fill="#8fd0f0" stroke="#4a7a96" stroke-width="0.8"/><ellipse cx="23.4" cy="3.9" rx="2.3" ry="1.9" fill="#8fd0f0" stroke="#4a7a96" stroke-width="0.8"/><ellipse cx="3.6" cy="18" rx="2" ry="2.4" fill="#d9a68a" stroke="#6b4a3a" stroke-width="0.6"/><ellipse cx="24.4" cy="18" rx="2" ry="2.4" fill="#d9a68a" stroke="#6b4a3a" stroke-width="0.6"/><ellipse cx="7" cy="27.3" rx="2.2" ry="1.6" fill="#d9a68a" stroke="#6b4a3a" stroke-width="0.6"/><ellipse cx="21" cy="27.3" rx="2.2" ry="1.6" fill="#d9a68a" stroke="#6b4a3a" stroke-width="0.6"/><path d="M4.2 9 Q4.2 0.9 14 0.9 Q23.8 0.9 23.8 9 V20 Q23.8 27.2 14 27.2 Q4.2 27.2 4.2 20 Z" fill="#9ad7f8" stroke="#3e6e88" stroke-width="1.1"/><circle cx="9" cy="8.2" r="3.6" fill="#fff"/><circle cx="19.3" cy="8.2" r="3.6" fill="#fff"/><circle cx="9.3" cy="8.5" r="1.8" fill="#000"/><circle cx="19.5" cy="8.5" r="1.8" fill="#000"/><ellipse cx="14.2" cy="12" rx="1.7" ry="1.3" fill="#e8b49a"/><ellipse cx="14.2" cy="11.3" rx="1.1" ry="0.8" fill="#000"/></svg></div>
<div class="abs" style="left:830px;top:58px;font-family:'Liberation Sans',sans-serif;font-size:27.8px;line-height:44px;color:#000">orchestration.go</div>
<div class="ic" style="left:1056px;top:73px"><svg width="16" height="16" viewBox="0 0 16 16"><path d="M1 1 L15 15 M15 1 L1 15" stroke="#818594" stroke-width="2"/></svg></div>
<div class="abs" style="left:764px;top:114px;width:332px;height:8px;border-radius:4px;background:#a8adbd"></div>
<div class="abs" style="left:764px;top:762px;width:2142px;height:44px;background:#f5f8fe"></div>
<div class="abs" style="left:896px;top:122px;width:2px;height:1829px;background:#ebecf0"></div>
<div class="abs" style="left:2774px;top:122px;width:2px;height:1829px;background:#ebecf0"></div>
<div class="abs" style="left:960px;top:410px;width:2px;height:220px;background:#e6e7eb"></div>
<div class="abs" style="left:764px;top:122px;width:2142px;height:1829px;overflow:hidden">
 <div class="abs" style="left:-764px;top:-122px;width:2942px;height:2042px">
 <div class="ln" style="top:105.0px">17</div><div class="cl" style="top:105.0px"></div><div class="ln" style="top:149.0px">18</div><div class="cl" style="top:149.0px"><span class="k">type</span> BuildConfig <span class="k">struct</span> {</div><div class="ln" style="top:193.0px">19</div><div class="cl" style="top:193.0px">    EinoAgent *<span class="t">EinoAgentBuildConfig</span></div><div class="ln" style="top:237.0px">20</div><div class="cl" style="top:237.0px">}</div><div class="ln" style="top:281.0px">21</div><div class="cl" style="top:281.0px"></div><div class="ln" style="top:325.0px">22</div><div class="cl" style="top:325.0px"><span class="k">func</span> <span class="f">BuildEinoAgent</span>(ctx <span class="p">context</span>.<span class="t">Context</span>, config *<span class="t">BuildConfig</span>) (r <span class="p">compose</span>.<span class="t">Runnable</span>[*<span class="t">UserMessage</span>, *<span class="p">schema</span>.<span class="t">Message</span>], err <span class="k">error</span>) {</div><div class="ln" style="top:369.0px">23</div><div class="cl" style="top:369.0px">    <span class="k">const</span> (</div><div class="ln" style="top:413.0px">24</div><div class="cl" style="top:413.0px">        <span class="c">InputToQuery</span>   = <span class="s">"InputToQuery"</span></div><div class="ln" style="top:457.0px">25</div><div class="cl" style="top:457.0px">        <span class="c">ChatTemplate</span>   = <span class="s">"ChatTemplate"</span></div><div class="ln" style="top:501.0px">26</div><div class="cl" style="top:501.0px">        <span class="c">ReactAgent</span>     = <span class="s">"ReactAgent"</span></div><div class="ln" style="top:545.0px">27</div><div class="cl" style="top:545.0px">        <span class="c">RedisRetriever</span> = <span class="s">"RedisRetriever"</span></div><div class="ln" style="top:589.0px">28</div><div class="cl" style="top:589.0px">        <span class="c">InputToHistory</span> = <span class="s">"InputToHistory"</span></div><div class="ln" style="top:633.0px">29</div><div class="cl" style="top:633.0px">    )</div><div class="ln" style="top:677.0px">30</div><div class="cl" style="top:677.0px">    g := <span class="p">compose</span>.<span class="f">NewGraph</span>[*<span class="t">UserMessage</span>, *<span class="p">schema</span>.<span class="t">Message</span>]()</div><div class="ln" style="top:721.0px">31</div><div class="cl" style="top:721.0px">    _ = g.<span class="f">AddLambdaNode</span>(<span class="c">InputToQuery</span>, <span class="p">compose</span>.<span class="f">InvokableLambdaWithOption</span>(<span class="f">NewInputToQuery</span>))</div><div class="ln cur" style="top:765.0px">32</div><div class="cl" style="top:765.0px">    chatTemplateKeyOfChatTemplate, <span class="u">err</span> := <span class="f">NewChatTemplate</span><span class="bm">(</span>ctx, config.EinoAgent.ChatTemplateKeyOfChatTemplate<span class="bm">)</span></div><div class="ln" style="top:809.0px">33</div><div class="cl" style="top:809.0px">    <span class="k">if</span> err != <span class="k">nil</span> <span class="fold">{ </span><span class="k">return</span> <span class="hint" style="width:43px"><span class="hbox" style="margin-left:3px;width:36px">r:</span></span><span class="k">nil</span>, err<span class="fold"> }</span></div><div class="ln" style="top:853.0px">36</div><div class="cl" style="top:853.0px">    _ = g.<span class="f">AddChatTemplateNode</span>(<span class="c">ChatTemplate</span>, chatTemplateKeyOfChatTemplate)</div><div class="ln" style="top:897.0px">37</div><div class="cl" style="top:897.0px">    reactAgentKeyOfLambda, <span class="u">err</span> := <span class="f">NewReactAgent</span>(ctx, config.EinoAgent.ReactAgentKeyOfLambda)</div><div class="ln" style="top:941.0px">38</div><div class="cl" style="top:941.0px">    <span class="k">if</span> err != <span class="k">nil</span> <span class="fold">{ </span><span class="k">return</span> <span class="hint" style="width:43px"><span class="hbox" style="margin-left:3px;width:36px">r:</span></span><span class="k">nil</span>, err<span class="fold"> }</span></div><div class="ln" style="top:985.0px">41</div><div class="cl" style="top:985.0px">    _ = g.<span class="f">AddLambdaNode</span>(<span class="c">ReactAgent</span>, reactAgentKeyOfLambda)</div><div class="ln" style="top:1029.0px">42</div><div class="cl" style="top:1029.0px">    redisRetrieverKeyOfRetriever, <span class="u">err</span> := <span class="f">NewRedisRetriever</span>(ctx, config.EinoAgent.RedisRetrieverKeyOfRetriever)</div><div class="ln" style="top:1073.0px">43</div><div class="cl" style="top:1073.0px">    <span class="k">if</span> err != <span class="k">nil</span> <span class="fold">{ </span><span class="k">return</span> <span class="hint" style="width:43px"><span class="hbox" style="margin-left:3px;width:36px">r:</span></span><span class="k">nil</span>, err<span class="fold"> }</span></div><div class="ln" style="top:1117.0px">46</div><div class="cl" style="top:1117.0px">    _ = g.<span class="f">AddRetrieverNode</span>(<span class="c">RedisRetriever</span>, redisRetrieverKeyOfRetriever, <span class="p">compose</span>.<span class="f">WithOutputKey</span>(<span class="hint" style="width:49px"><span class="hbox" style="margin-left:4px;width:40px">k:</span></span><span class="s">"documents"</span>))</div><div class="ln" style="top:1161.0px">47</div><div class="cl" style="top:1161.0px">    _ = g.<span class="f">AddLambdaNode</span>(<span class="c">InputToHistory</span>, <span class="p">compose</span>.<span class="f">InvokableLambdaWithOption</span>(<span class="f">NewInputToHistory</span>))</div><div class="ln" style="top:1205.0px">48</div><div class="cl" style="top:1205.0px">    _ = g.<span class="f">AddEdge</span>(<span class="p">compose</span>.<span class="c">START</span>, <span class="c">InputToQuery</span>)</div><div class="ln" style="top:1249.0px">49</div><div class="cl" style="top:1249.0px">    _ = g.<span class="f">AddEdge</span>(<span class="p">compose</span>.<span class="c">START</span>, <span class="c">InputToHistory</span>)</div><div class="ln" style="top:1293.0px">50</div><div class="cl" style="top:1293.0px">    _ = g.<span class="f">AddEdge</span>(<span class="c">ReactAgent</span>, <span class="p">compose</span>.<span class="c">END</span>)</div><div class="ln" style="top:1337.0px">51</div><div class="cl" style="top:1337.0px">    _ = g.<span class="f">AddEdge</span>(<span class="c">InputToQuery</span>, <span class="c">RedisRetriever</span>)</div><div class="ln" style="top:1381.0px">52</div><div class="cl" style="top:1381.0px">    _ = g.<span class="f">AddEdge</span>(<span class="c">RedisRetriever</span>, <span class="c">ChatTemplate</span>)</div><div class="ln" style="top:1425.0px">53</div><div class="cl" style="top:1425.0px">    _ = g.<span class="f">AddEdge</span>(<span class="c">InputToHistory</span>, <span class="c">ChatTemplate</span>)</div><div class="ln" style="top:1469.0px">54</div><div class="cl" style="top:1469.0px">    _ = g.<span class="f">AddEdge</span>(<span class="c">ChatTemplate</span>, <span class="c">ReactAgent</span>)</div><div class="ln" style="top:1513.0px">55</div><div class="cl" style="top:1513.0px">    r, err = g.<span class="f">Compile</span>(ctx, <span class="p">compose</span>.<span class="f">WithGraphName</span>(<span class="hint" style="width:167px"><span class="hbox" style="margin-left:4px;width:158px">graphName:</span></span><span class="s">"EinoAgent"</span>), <span class="p">compose</span>.<span class="f">WithNodeTriggerMode</span>(<span class="p">compose</span>.<span class="c">AllPredecessor</span>))</div><div class="ln" style="top:1557.0px">56</div><div class="cl" style="top:1557.0px">    <span class="k">if</span> err != <span class="k">nil</span> <span class="fold">{ </span><span class="k">return</span> <span class="hint" style="width:43px"><span class="hbox" style="margin-left:3px;width:36px">r:</span></span><span class="k">nil</span>, err<span class="fold"> }</span></div><div class="ln" style="top:1601.0px">59</div><div class="cl" style="top:1601.0px">    <span class="k">return</span> r, err</div><div class="ln" style="top:1645.0px">60</div><div class="cl" style="top:1645.0px">}</div><div class="ln" style="top:1689.0px">61</div><div class="cl" style="top:1689.0px"></div>
 </div>
</div>
<div class="inl" style="left:1317px;top:149.4px">3 usages</div>
<div class="ic" style="left:1447px;top:162px"><svg width="17" height="15" viewBox="0 0 17 15"><circle cx="8.5" cy="4" r="3.8" fill="#b4bcc6"/><path d="M0.5 15 Q0.5 8.5 8.5 8.5 Q16.5 8.5 16.5 15 Z" fill="#b4bcc6"/></svg></div>
<div class="inl" style="left:1473px;top:149.4px">huhailong.andy</div>
<div class="inl" style="left:2893px;top:325.4px">2 usages</div>
<div class="ic" style="left:878px;top:820px"><svg width="12" height="18" viewBox="0 0 12 18"><path d="M1.5 1.5 L9 9 L1.5 16.5" fill="none" stroke="#a8adbd" stroke-width="2"/></svg></div>
<div class="ic" style="left:878px;top:952px"><svg width="12" height="18" viewBox="0 0 12 18"><path d="M1.5 1.5 L9 9 L1.5 16.5" fill="none" stroke="#a8adbd" stroke-width="2"/></svg></div>
<div class="ic" style="left:878px;top:1084px"><svg width="12" height="18" viewBox="0 0 12 18"><path d="M1.5 1.5 L9 9 L1.5 16.5" fill="none" stroke="#a8adbd" stroke-width="2"/></svg></div>
<div class="ic" style="left:878px;top:1568px"><svg width="12" height="18" viewBox="0 0 12 18"><path d="M1.5 1.5 L9 9 L1.5 16.5" fill="none" stroke="#a8adbd" stroke-width="2"/></svg></div>
<div class="ic" style="left:838px;top:336px"><svg width="28" height="14" viewBox="0 0 28 14"><g fill="#7d8291"><rect x="0" y="8" width="6.3" height="6.3" rx="1.3"/><rect x="7.9" y="0.3" width="6" height="6.3" rx="1.3"/><rect x="9.3" y="8" width="6.3" height="6.3" rx="1.3"/><rect x="17.1" y="0.3" width="6.3" height="6.3" rx="1.3"/></g><path d="M5 9.5 L9 5 M14.5 9.5 L18.5 5" stroke="#7d8291" stroke-width="1.6"/><path d="M20.9 8 V14 M23 10.5 V14 M25.1 9.5 V13.5 M27.1 7.5 V14" stroke="#7d8291" stroke-width="1.1"/></svg></div>
<!-- breadcrumbs -->
<div class="abs" style="left:764px;top:1950px;width:2142px;height:2px;background:#ebecf0"></div>
<div class="abs" style="left:784px;top:1951px;font-family:'Liberation Sans',sans-serif;font-size:28.6px;line-height:48px;color:#6c707e;white-space:pre">BuildEinoAgent(ctx context.Context, config *BuildConfig) (r compose.Runnable[*UserMessage, *schema.Message], err error)</div>
<div class="abs" style="left:0;top:1998px;width:2942px;height:2px;background:#ebecf0"></div>
<div class="abs" style="left:0;top:2000px;width:2942px;height:42px;background:#f7f8fa"></div>
<!-- red annotation boxes -->
<div class="abs" style="left:207px;top:321px;width:404px;height:477px;border:6px solid #ff0000"></div>
<div class="abs" style="left:872px;top:316px;width:2012px;height:1369px;border:6px solid #ff0000"></div>
</div></div>
</body></html>
